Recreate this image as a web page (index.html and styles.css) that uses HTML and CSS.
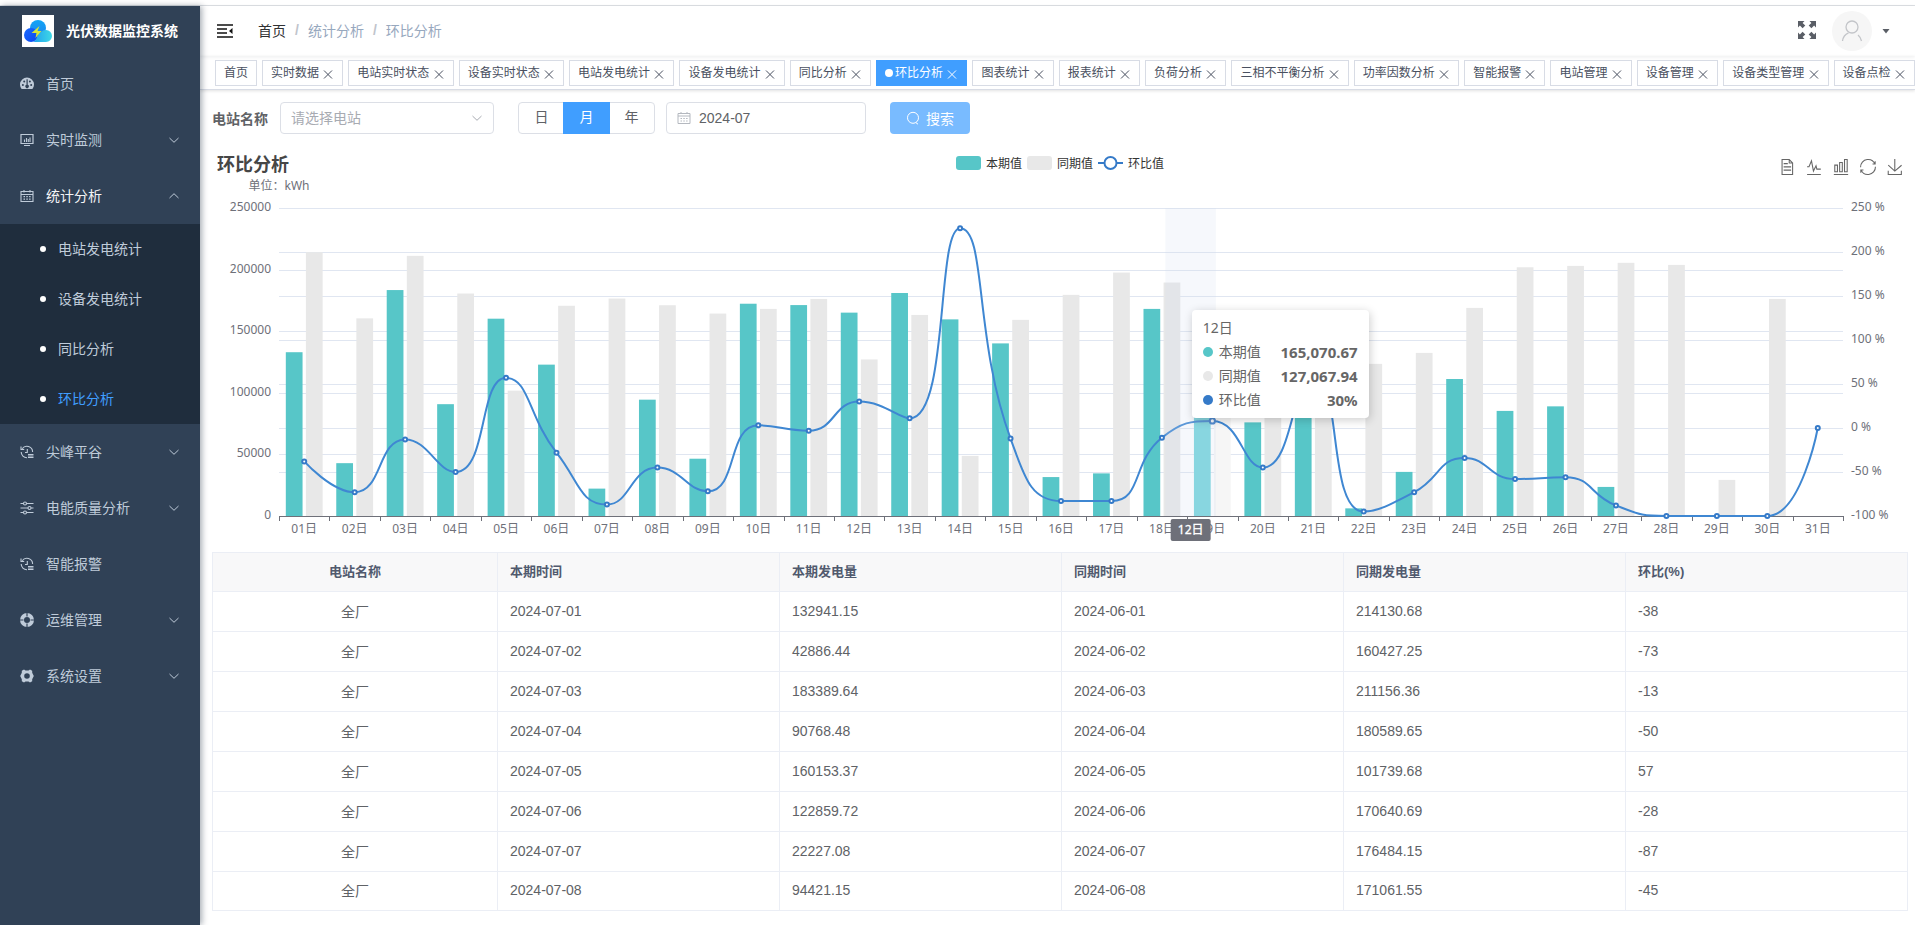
FILE: index.html
```html
<!DOCTYPE html>
<html lang="zh-CN">
<head>
<meta charset="utf-8">
<title>光伏数据监控系统</title>
<link rel="stylesheet" href="styles.css">
</head>
<body>
<svg class="sprite" aria-hidden="true">
  <symbol id="i-close" viewBox="0 0 12 12"><path d="M2 2.500l8 8M10 2.500l-8 8" fill="none" stroke="currentColor" stroke-width="1"/></symbol>
  <symbol id="i-down" viewBox="0 0 12 12"><path d="M1.500 4L6 8.300 10.500 4" fill="none" stroke="currentColor" stroke-width="1"/></symbol>
  <symbol id="i-history" viewBox="0 0 14 14"><path d="M2.200 3.800A5.700 5.700 0 0 1 12.600 7M1.200 7A5.700 5.700 0 0 0 7 12.700M1 1.500v3h3.200M7.300 4v3.500H5" fill="none" stroke="currentColor" stroke-width="1.100"/><path d="M8 9.500h5.500M8 11h5.500M8 12.500h5.500" stroke="currentColor" stroke-width="1"/></symbol>
</svg>
<div class="app">
  <aside class="sidebar">
    <a class="brand" href="#">
      <span class="brand-logo">
        <svg viewBox="0 0 32 32" width="32" height="32">
          <defs>
            <linearGradient id="ga" x1="0" y1="0" x2="1" y2="1"><stop offset="0" stop-color="#1a6bff"/><stop offset="1" stop-color="#0a45f0"/></linearGradient>
            <linearGradient id="gb" x1="0" y1="0" x2="0" y2="1"><stop offset="0" stop-color="#12a5f5"/><stop offset="1" stop-color="#1f86f0"/></linearGradient>
            <linearGradient id="gc" x1="0" y1="0" x2="1" y2="0"><stop offset="0" stop-color="#1fa0ee"/><stop offset="1" stop-color="#3fd8e6"/></linearGradient>
          </defs>
          <circle cx="16" cy="13" r="8" fill="url(#gb)"/>
          <circle cx="9" cy="20" r="7" fill="url(#ga)"/>
          <path d="M11 27c3-1 4-5 6-8 2-2 4-4 7-4a6 6 0 0 1 0 12z" fill="url(#gc)"/>
          <path d="M17.500 11l-8 7h5l-1 5 6-7h-4z" fill="#d6e63a"/>
        </svg>
      </span>
      <h1 class="brand-name">光伏数据监控系统</h1>
    </a>
    <nav class="menu">
      <a class="menu-item" href="#">
        <svg class="menu-icon" viewBox="0 0 14 14"><path d="M1.600 12A7 7 0 1 1 12.400 12z" fill="currentColor"/><g fill="#304156"><circle cx="2.900" cy="8" r="1"/><circle cx="4.200" cy="4.500" r="1"/><circle cx="9.900" cy="4.500" r="1"/><circle cx="11.200" cy="8" r="1"/><path d="M6.500 2.200h1.200v5.600a1.700 1.700 0 1 1-1.200 0z"/></g></svg>
        <span class="menu-text">首页</span>
      </a>
      <a class="menu-item" href="#">
        <svg class="menu-icon" viewBox="0 0 14 14"><path d="M1 1.500h12v9H1zM4 12.500h6" fill="none" stroke="currentColor" stroke-width="1.200"/><path d="M4.500 9V6.500M6.500 9V5M8.300 9V6M10 9V4.500" stroke="currentColor" stroke-width="1.100"/></svg>
        <span class="menu-text">实时监测</span>
        <svg class="menu-arrow"><use href="#i-down"/></svg>
      </a>
      <a class="menu-item menu-open" href="#">
        <svg class="menu-icon" viewBox="0 0 14 14"><path d="M1 2.500h12v10H1zM1 5.500h12M4 1v2.500M10 1v2.500" fill="none" stroke="currentColor" stroke-width="1.100"/><path d="M3.500 7.700h7.500M3.500 10.200h7.500" stroke="currentColor" stroke-width="1.300" stroke-dasharray="1.500 1.300"/></svg>
        <span class="menu-text">统计分析</span>
        <svg class="menu-arrow menu-arrow-up"><use href="#i-down"/></svg>
      </a>
      <div class="submenu">
        <a class="submenu-item" href="#"><span>电站发电统计</span></a>
        <a class="submenu-item" href="#"><span>设备发电统计</span></a>
        <a class="submenu-item" href="#"><span>同比分析</span></a>
        <a class="submenu-item submenu-active" href="#"><span>环比分析</span></a>
      </div>
      <a class="menu-item" href="#">
        <svg class="menu-icon"><use href="#i-history"/></svg>
        <span class="menu-text">尖峰平谷</span>
        <svg class="menu-arrow"><use href="#i-down"/></svg>
      </a>
      <a class="menu-item" href="#">
        <svg class="menu-icon" viewBox="0 0 14 14"><g fill="none" stroke="currentColor" stroke-width="1.100"><path d="M0.500 2.500h3M6.500 2.500h7M0.500 7h7.500M11 7h2.500M0.500 11.500h3M6.500 11.500h7"/><circle cx="5" cy="2.500" r="1.500"/><circle cx="9.500" cy="7" r="1.500"/><circle cx="5" cy="11.500" r="1.500"/></g></svg>
        <span class="menu-text">电能质量分析</span>
        <svg class="menu-arrow"><use href="#i-down"/></svg>
      </a>
      <a class="menu-item" href="#">
        <svg class="menu-icon"><use href="#i-history"/></svg>
        <span class="menu-text">智能报警</span>
      </a>
      <a class="menu-item" href="#">
        <svg class="menu-icon" viewBox="0 0 14 14"><circle cx="7" cy="7" r="5" fill="none" stroke="currentColor" stroke-width="4"/><path d="M7 0v3.500M7 10.500V14M0 7h3.500M10.500 7H14" stroke="#304156" stroke-width="1.200"/></svg>
        <span class="menu-text">运维管理</span>
        <svg class="menu-arrow"><use href="#i-down"/></svg>
      </a>
      <a class="menu-item" href="#">
        <svg class="menu-icon" viewBox="0 0 14 14"><path fill="currentColor" fill-rule="evenodd" d="M4 0.500l1.500 1h3l1.500-1 2.200 1.300v2L13.800 7l-1.600 3.200v2L10 13.500l-1.500-1h-3l-1.500 1-2.200-1.300v-2L0.200 7l1.600-3.200v-2zM7 4.200a2.800 2.800 0 1 0 0 5.600 2.800 2.800 0 0 0 0-5.600z"/></svg>
        <span class="menu-text">系统设置</span>
        <svg class="menu-arrow"><use href="#i-down"/></svg>
      </a>
    </nav>
  </aside>

  <div class="main">
    <header class="navbar">
      <button class="fold" type="button" aria-label="折叠菜单">
        <svg viewBox="0 0 16 14" width="16" height="14"><path d="M0 1h16M0 5h10M0 9h10M0 13h16" stroke="#111" stroke-width="1.400"/><path d="M15.500 4v6L12 7z" fill="#111"/></svg>
      </button>
      <nav class="breadcrumb">
        <a class="crumb" href="#">首页</a><span class="crumb-sep">/</span><span class="crumb-off">统计分析</span><span class="crumb-sep">/</span><span class="crumb-off">环比分析</span>
      </nav>
      <button class="fullscreen" type="button" aria-label="全屏">
        <svg viewBox="0 0 18 18" width="18" height="18" fill="#5a5e66"><path id="fs" d="M0 0h6.500L4.600 1.900l2.700 2.700-2.700 2.700-2.700-2.700L0 6.500z"/><use href="#fs" transform="matrix(-1 0 0 1 18 0)"/><use href="#fs" transform="matrix(1 0 0 -1 0 18)"/><use href="#fs" transform="matrix(-1 0 0 -1 18 18)"/></svg>
      </button>
      <button class="user" type="button" aria-label="用户">
        <span class="avatar"><svg viewBox="0 0 22 22" width="22" height="22" fill="none" stroke="#c3c5c9" stroke-width="1.300"><circle cx="11" cy="7" r="6"/><path d="M1.500 21c.5-4 3-7 6-8.200M17 15c1.800 1.500 3 3.500 3.500 6"/></svg></span>
        <svg class="caret" viewBox="0 0 8 5" width="8" height="5"><path d="M0.500 0h7L4 4.500z" fill="#5a5e66"/></svg>
      </button>
    </header>
    <nav class="tags" id="tags"></nav>

    <section class="content">
      <form class="filters">
        <label class="filter-label" for="station">电站名称</label>
        <span class="select-box">
          <select id="station"><option>请选择电站</option></select>
          <svg class="select-arrow"><use href="#i-down"/></svg>
        </span>
        <span class="periods">
          <label class="period"><input type="radio" name="period"><span>日</span></label>
          <label class="period"><input type="radio" name="period" checked><span>月</span></label>
          <label class="period"><input type="radio" name="period"><span>年</span></label>
        </span>
        <span class="date-box">
          <svg viewBox="0 0 14 14" width="14" height="14"><path d="M1 2.500h12v10H1zM1 5h12M4 1v2M10 1v2" fill="none" stroke="#b4b8bf"/><path d="M3.500 7.500h7.500M3.500 10h7.500" stroke="#b4b8bf" stroke-dasharray="1.500 1.300"/></svg>
          <input type="text" value="2024-07" aria-label="月份">
        </span>
        <button class="search" type="button">
          <svg viewBox="0 0 14 14" width="14" height="14"><path d="M9.800 11.600l2.200 1.600" stroke="#fff"/><circle cx="7" cy="6.800" r="5.500" fill="none" stroke="#fff"/></svg>
          <span>搜索</span>
        </button>
      </form>

      <div class="chart">
        <div class="chart-head">
          <h2 class="chart-title">环比分析</h2>
          <div class="legend">
            <span class="legend-item"><i class="swatch swatch-now"></i>本期值</span>
            <span class="legend-item"><i class="swatch swatch-prev"></i>同期值</span>
            <span class="legend-item"><svg width="25" height="14" viewBox="0 0 25 14"><path d="M0 7h25" stroke="#357ac8" stroke-width="2"/><circle cx="12.500" cy="7" r="6" fill="#fff" stroke="#357ac8" stroke-width="2"/></svg>环比值</span>
          </div>
          <div class="toolbox">
            <button type="button" aria-label="数据视图"><svg viewBox="0 0 60 60"><path d="M17.500,17.300H33M45.400,29.500h-28M11.500,2v56H51V14.800L38.400,2H11.500zM38.400,2.200v12.700H51M45.400,41.700h-28"/></svg></button>
            <button type="button" aria-label="切换为折线图"><svg viewBox="0 0 60 60"><path d="M4.100,28.900h7.100l9.300-22l7.400,38l9.700-19.700l3,12.800h14.900M4.100,58h51.400"/></svg></button>
            <button type="button" aria-label="切换为柱状图"><svg viewBox="0 0 60 60"><path d="M6.700,22.900h10V48h-10V22.900zM24.900,13h10v35h-10V13zM43.200,2h10v46h-10V2zM3.100,58h53.700"/></svg></button>
            <button type="button" aria-label="还原"><svg viewBox="0 0 60 60"><path d="M47,18.900h9.800V8.700M56.300,20.100C52.100,9,40.500,0.600,26.800,2.100C12.600,3.700,1.600,16.200,2.100,30.600M13,41.100H3.100v10.200M3.700,39.900c4.200,11.100,15.800,19.500,29.500,18c14.200-1.600,25.200-14.100,24.700-28.500"/></svg></button>
            <button type="button" aria-label="保存为图片"><svg viewBox="0 0 60 60"><path d="M4.700,22.900L29.300,45.500L54.700,23.400M4.600,43.600L4.600,58L53.800,58L53.800,43.600M29.200,45.100L29.200,0"/></svg></button>
          </div>
        </div>
        <div class="plot">
          <svg id="plot" height="376"></svg>
          <div class="tip" id="tip">
            <div class="tip-title">12日</div>
            <div class="tip-row"><i class="dot dot-now"></i>本期值<b>165,070.67</b></div>
            <div class="tip-row"><i class="dot dot-prev"></i>同期值<b>127,067.94</b></div>
            <div class="tip-row"><i class="dot dot-rate"></i>环比值<b>30%</b></div>
          </div>
        </div>
      </div>

      <table class="grid">
        <thead><tr><th class="col-name">电站名称</th><th>本期时间</th><th>本期发电量</th><th>同期时间</th><th>同期发电量</th><th>环比(%)</th></tr></thead>
        <tbody>
          <tr><td>全厂</td><td>2024-07-01</td><td>132941.15</td><td>2024-06-01</td><td>214130.68</td><td>-38</td></tr>
          <tr><td>全厂</td><td>2024-07-02</td><td>42886.44</td><td>2024-06-02</td><td>160427.25</td><td>-73</td></tr>
          <tr><td>全厂</td><td>2024-07-03</td><td>183389.64</td><td>2024-06-03</td><td>211156.36</td><td>-13</td></tr>
          <tr><td>全厂</td><td>2024-07-04</td><td>90768.48</td><td>2024-06-04</td><td>180589.65</td><td>-50</td></tr>
          <tr><td>全厂</td><td>2024-07-05</td><td>160153.37</td><td>2024-06-05</td><td>101739.68</td><td>57</td></tr>
          <tr><td>全厂</td><td>2024-07-06</td><td>122859.72</td><td>2024-06-06</td><td>170640.69</td><td>-28</td></tr>
          <tr><td>全厂</td><td>2024-07-07</td><td>22227.08</td><td>2024-06-07</td><td>176484.15</td><td>-87</td></tr>
          <tr><td>全厂</td><td>2024-07-08</td><td>94421.15</td><td>2024-06-08</td><td>171061.55</td><td>-45</td></tr>
        </tbody>
      </table>
    </section>
  </div>
</div>
<script src="app.js"></script>
</body>
</html>
```

FILE: styles.css
```css
* { box-sizing: border-box; }
body {
  margin: 0;
  padding-top: 5px;
  height: 100vh;
  font-family: "Liberation Sans", "Noto Sans CJK SC", sans-serif;
  font-size: 14px;
  color: #606266;
  background: #fff;
  overflow: hidden;
}
a { color: inherit; text-decoration: none; }
button { border: 0; padding: 0; background: none; font: inherit; color: inherit; cursor: pointer; }
svg { display: block; flex: none; }
i { font-style: normal; }
.sprite { position: absolute; width: 0; height: 0; }

.app {
  display: flex;
  height: 100%;
  border-top: 1px solid #dcdfe3;
}

/* Sidebar */
.sidebar {
  flex: none;
  width: 200px;
  background: #304156;
  color: #bfcbd9;
  box-shadow: 2px 0 6px rgba(0, 21, 41, .35);
  z-index: 2;
}
.brand { display: flex; align-items: center; justify-content: center; gap: 12px; height: 50px; }
.brand-logo { background: #fff; }
.brand-name { margin: 0; padding-bottom: 2px; font-size: 14px; font-weight: 700; color: #fff; }
.menu-item { display: flex; align-items: center; height: 56px; padding: 0 20px; }
.menu-icon { width: 14px; height: 14px; margin-right: 12px; }
.menu-text { flex: 1; padding-bottom: 2px; }
.menu-arrow { width: 12px; height: 12px; }
.menu-arrow-up { transform: rotate(180deg); }
.menu-open { color: #f4f4f5; }
.menu-open .menu-icon, .menu-open .menu-arrow { color: #bfcbd9; }
.submenu { background: #1f2d3d; }
.submenu-item { display: flex; align-items: center; gap: 12px; height: 50px; padding-left: 40px; }
.submenu-item span { padding-bottom: 2px; }
.submenu-item::before { content: ""; width: 6px; height: 6px; border-radius: 50%; background: #fff; }
.submenu-active { color: #409eff; }

/* Top bar */
.main { flex: 1; min-width: 0; }
.navbar {
  display: flex;
  align-items: center;
  height: 50px;
  padding: 0 25px 0 17px;
  box-shadow: 0 1px 4px rgba(0, 21, 41, .08);
}
.breadcrumb { display: flex; align-items: center; flex: 1; margin-left: 25px; padding-bottom: 2px; }
.crumb { color: #303133; }
.crumb-sep { margin: 0 9px; font-weight: 700; color: #c0c4cc; }
.crumb-off { color: #97a8be; }
.fullscreen { margin: 0 16px 2px 0; }
.user { display: flex; align-items: center; gap: 10px; }
.avatar { display: flex; align-items: center; justify-content: center; width: 40px; height: 40px; border-radius: 50%; background: #f6f6f6; }

.tags {
  display: flex;
  gap: 5px;
  height: 34px;
  padding: 4px 0 0 15px;
  border-bottom: 1px solid #d8dce5;
  box-shadow: 0 1px 3px rgba(0, 0, 0, .12);
  overflow: hidden;
}
.tag {
  flex: none;
  height: 26px;
  padding: 0 8px;
  border: 1px solid #d8dce5;
  font-size: 12px;
  line-height: 24px;
  color: #495060;
  white-space: nowrap;
}
.tag svg { display: inline-block; width: 12px; height: 12px; vertical-align: -3px; }
.tag-active { color: #fff; background: #409eff; border-color: #409eff; }
.tag-active::before { content: ""; display: inline-block; width: 8px; height: 8px; margin-right: 2px; border-radius: 50%; background: #fff; }

/* Filters */
.content { padding: 12px 7px 14px 12px; }
.filters { display: flex; align-items: center; height: 32px; }
.filter-label { margin-right: 12px; font-weight: 700; }
.select-box { position: relative; width: 214px; margin-right: 24px; }
.select-box select {
  display: block;
  width: 100%;
  height: 32px;
  padding: 0 30px 0 10px;
  border: 1px solid #dcdfe6;
  border-radius: 4px;
  background: #fff;
  font: inherit;
  color: #a8abb2;
  appearance: none;
}
.select-arrow { position: absolute; top: 10px; right: 11px; width: 12px; height: 12px; color: #a8abb2; pointer-events: none; }
.periods { display: flex; margin-right: 11px; border: 1px solid #dcdfe6; border-radius: 4px; }
.period { position: relative; }
.period input { position: absolute; opacity: 0; margin: 0; }
.period span { display: block; width: 45px; height: 30px; line-height: 29px; text-align: center; }
.period input:checked + span { background: #409eff; color: #fff; box-shadow: 0 0 0 1px #409eff; }
.date-box { display: flex; align-items: center; gap: 8px; width: 200px; height: 32px; margin-right: 24px; padding: 0 10px; border: 1px solid #dcdfe6; border-radius: 4px; }
.date-box input { flex: 1; min-width: 0; padding: 0; border: 0; outline: 0; font: inherit; color: #606266; }
.search { display: flex; align-items: center; justify-content: center; gap: 6px; width: 80px; height: 32px; padding-bottom: 1px; border-radius: 4px; background: #79bbff; color: #fff; }

/* Chart */
.chart { margin-top: 16px; font-family: "Noto Sans", "Noto Sans CJK SC", sans-serif; }
.chart-head { display: grid; grid-template-columns: 1fr auto 1fr; height: 26px; padding: 0 5px; }
.chart-title { margin: 0; font-size: 18px; line-height: 28px; color: #464646; }
.legend { display: flex; gap: 5px; height: 26px; align-items: center; font-size: 12px; color: #333; }
.legend-item { display: flex; align-items: center; gap: 5px; }
.swatch { width: 25px; height: 14px; border-radius: 3px; }
.swatch-now, .dot-now { background: #57c6c8; }
.swatch-prev, .dot-prev { background: #e8e8e8; }
.toolbox { display: flex; justify-content: flex-end; align-items: center; gap: 11px; height: 34px; }
.toolbox svg { width: 16px; height: 16px; fill: none; stroke: #666; stroke-width: 4; overflow: visible; }
.plot { position: relative; }
.plot > svg { width: 100%; font-size: 12px; fill: #6e7079; }
.tip {
  position: absolute;
  top: 134px;
  width: 177px;
  padding: 10px 11px 11px;
  border-radius: 4px;
  background: #fff;
  box-shadow: 1px 2px 10px rgba(0, 0, 0, .2);
  font-size: 14px;
  line-height: 14px;
  color: #666;
}
.tip-title { line-height: 15px; }
.tip-row { display: flex; align-items: center; margin-top: 10px; }
.tip-row b { margin-left: auto; font-size: 15px; }
.dot { width: 10px; height: 10px; margin-right: 6px; border-radius: 50%; }
.dot-rate { background: #357ac8; }

/* Table */
.grid { width: 100%; table-layout: fixed; border-collapse: collapse; }
.grid th, .grid td { height: 40px; padding: 0 12px 2px; border: 1px solid #ebeef5; text-align: left; }
.grid th { height: 39px; padding-bottom: 4px; background: #f8f8f9; color: #515a6e; font-size: 13px; font-weight: 700; }
.grid tr:last-child td { height: 39px; }
.grid .col-name { width: 285px; }
.grid th:first-child, .grid td:first-child { text-align: center; }
```

FILE: app.js
```js
const tags = ['首页', '实时数据', '电站实时状态', '设备实时状态', '电站发电统计', '设备发电统计', '同比分析', '环比分析', '图表统计', '报表统计', '负荷分析', '三相不平衡分析', '功率因数分析', '智能报警', '电站管理', '设备管理', '设备类型管理', '设备点检'];
document.getElementById('tags').innerHTML = tags.map((name, i) => {
  const close = i ? ' <svg><use href="#i-close"/></svg>' : '';
  return `<a class="tag${name === '环比分析' ? ' tag-active' : ''}" href="#">${name}${close}</a>`;
}).join('');

const now = [132941, 42886, 183390, 90768, 160153, 122860, 22227, 94421, 46500, 172300, 171200, 165071, 181000, 159600, 140100, 31600, 34600, 168100, 115000, 76000, 130000, 6200, 35800, 111200, 85300, 89000, 23600, 0, 0, 0, 0];
const prev = [214131, 160427, 211156, 180590, 101740, 170641, 176484, 171062, 164300, 168100, 176200, 127068, 163200, 48800, 159200, 179500, 197600, 189500, 107500, 139000, 118000, 123500, 132400, 168900, 201900, 203000, 205500, 203800, 29300, 176200, 0];
const rate = [-38, -73, -13, -50, 57, -28, -87, -45, -72, 3, -3, 30, 11, 227, -12, -83, -83, -11, 8, -45, 60, -95, -73, -34, -58, -56, -88, -100, -100, -100, 0];
const hovered = 18;
const pointerAt = 18.07;

const clamp = (v, a, b) => Math.max(Math.min(v, Math.max(a, b)), Math.min(a, b));

function smoothPath(pts) {
  let d = `M${pts[0]}`;
  let c0 = pts[0];
  for (let i = 1; i < pts.length; i++) {
    const p = pts[i - 1], q = pts[i], n = pts[i + 1];
    let c1 = q, next = q;
    if (n) {
      const lp = Math.hypot(q[0] - p[0], q[1] - p[1]);
      const ln = Math.hypot(n[0] - q[0], n[1] - q[1]);
      const r = ln / (ln + lp);
      next = [0, 1].map(k => clamp(q[k] + (n[k] - p[k]) * 0.5 * r, n[k], q[k]));
      c1 = [0, 1].map(k => clamp(q[k] - (next[k] - q[k]) * lp / ln, p[k], q[k]));
      next = [0, 1].map(k => q[k] + (q[k] - c1[k]) * ln / lp);
    }
    d += `C${c0} ${c1} ${q}`;
    c0 = next;
  }
  return d;
}

function draw() {
  const svg = document.getElementById('plot');
  const width = svg.parentNode.clientWidth;
  const left = 67, right = width - 65, top = 32, height = 308, bottom = top + height;
  const band = (right - left) / now.length;
  const bar = band * 0.73 / 2.2;
  const yl = v => bottom - v / 250000 * height;
  const yr = v => bottom - (v + 100) / 350 * height;
  let out = '';
  const rule = y => `<path d="M${left} ${Math.round(y) + 0.5}H${right}" stroke="#e0e6f1"/>`;
  for (let v = 0; v <= 250000; v += 50000) {
    if (v) out += rule(yl(v));
    out += `<text x="${left - 8}" y="${yl(v) + 3}" text-anchor="end">${v}</text>`;
  }
  for (let v = -100; v <= 250; v += 50) {
    if (v > -100 && v < 250) out += rule(yr(v));
    out += `<text x="${right + 8}" y="${yr(v) + 3}">${v} %</text>`;
  }
  out += `<text x="${left}" y="14" text-anchor="middle">单位：kWh</text>`;
  now.forEach((v, i) => {
    const x = left + i * band + band * 0.135;
    out += `<rect x="${x}" y="${yl(v)}" width="${bar}" height="${bottom - yl(v)}" fill="${i === hovered ? '#76d5dc' : '#57c6c8'}"/>`;
    out += `<rect x="${x + bar * 1.2}" y="${yl(prev[i])}" width="${bar}" height="${bottom - yl(prev[i])}" fill="${i === hovered ? '#f6f6f6' : '#e8e8e8'}"/>`;
    out += `<text x="${left + (i + 0.5) * band}" y="${bottom + 17}" text-anchor="middle">${String(i + 1).padStart(2, '0')}日</text>`;
  });
  let ticks = `M${left} ${bottom + 0.5}H${right}`;
  for (let i = 0; i <= now.length; i++) ticks += `M${Math.round(left + i * band) + 0.5} ${bottom}v5`;
  out += `<path d="${ticks}" stroke="#6e7079"/>`;
  const pts = rate.map((v, i) => [left + (i + 0.5) * band, yr(v)]);
  out += `<path d="${smoothPath(pts)}" fill="none" stroke="#3f87d2" stroke-width="2"/>`;
  pts.forEach(([x, y], i) => {
    out += `<circle cx="${x}" cy="${y}" r="${i === hovered ? 2.6 : 2}" fill="#fff" stroke="#357ac8" stroke-width="2"/>`;
  });
  const px = left + pointerAt * band;
  out += `<rect x="${px - band / 2}" y="${top}" width="${band}" height="${height}" fill="#d2dbee" opacity=".2"/>`;
  out += `<rect x="${px - 20}" y="${bottom + 3}" width="40" height="22" rx="2" fill="#6e7079"/>`;
  out += `<text x="${px}" y="${bottom + 18}" text-anchor="middle" fill="#fff" stroke="#fff" stroke-width=".3">12日</text>`;
  svg.innerHTML = out;
  document.getElementById('tip').style.left = `${px + 1}px`;
}
draw();
window.addEventListener('resize', draw);
```
